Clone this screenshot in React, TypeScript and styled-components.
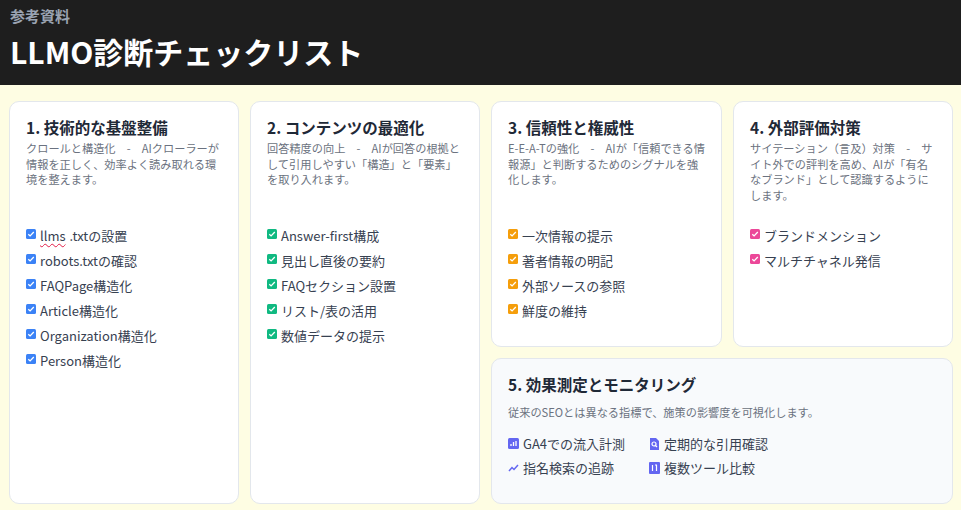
import React from "react";
import styled, { createGlobalStyle } from "styled-components";

const Global = createGlobalStyle`
  body { margin: 0; background: #fefde3; font-family: "Noto Sans CJK JP", "Noto Sans", sans-serif; }
`;

const Header = styled.header`
  background: #1e1e1e; height: 85px; box-sizing: border-box; padding: 5px 10px 0;
`;
const Sub = styled.div`color: #9aa3b2; font-size: 15px; font-weight: 700; line-height: 22px;`;
const Title = styled.h1`color: #fff; font-size: 30px; font-weight: 700; margin: 4px 0 0; line-height: 40px;`;

const Grid = styled.main`
  display: grid; grid-template-columns: 230px 230px 231px 220px; gap: 11px;
  grid-template-rows: 246px 146px; padding: 16px 8px 6px 9px;
`;
const Card = styled.section<{ $span?: boolean; $tall?: boolean; $alt?: boolean }>`
  background: ${p => (p.$alt ? "#f8fafc" : "#fff")};
  border: 1px solid #e3e7ec; border-radius: 10px; box-sizing: border-box;
  padding: 14px 16px;
  ${p => (p.$tall ? "grid-row: span 2;" : "")}
  ${p => (p.$span ? "grid-column: span 2; padding: 14px 16px;" : "")}
`;
const CardTitle = styled.h2`font-size: 15.5px; font-weight: 700; color: #1f2937; margin: 0; line-height: 22px;`;
const Desc = styled.p<{ $short?: boolean }>`
  font-size: 11.2px; color: #6b7280; line-height: 15.5px; margin: 3px 0 0;
  min-height: ${p => (p.$short ? "auto" : "86px")};
  ${p => (p.$short ? "margin-top: 10px;" : "")}
`;
const List = styled.ul`list-style: none; margin: 0; padding: 0; display: flex; flex-direction: column; gap: 6.7px;`;
const Item = styled.li`display: flex; align-items: center; gap: 4px; font-size: 13px; color: #374151; line-height: 18.3px;`;
const Box = styled.span<{ $c: string }>`
  width: 10px; height: 10px; background: ${p => p.$c}; border-radius: 1.5px;
  display: inline-flex; align-items: center; justify-content: center; margin-top: -4px; flex: none;
`;
const Wavy = styled.span`text-decoration: underline wavy #e11d48; text-decoration-thickness: 1px; text-underline-offset: 2px;`;
const Metrics = styled.div`display: grid; grid-template-columns: 141px auto; row-gap: 4px; margin-top: 13px;`;
const Metric = styled.div`display: flex; align-items: center; gap: 4px; font-size: 13px; color: #374151; line-height: 20px;`;

const Check = ({ c }: { c: string }) => (
  <Box $c={c}>
    <svg width="8" height="8" viewBox="0 0 8 8"><path d="M1.3 4.2 3.1 5.9 6.8 2" stroke="#fff" strokeWidth="1.3" fill="none" /></svg>
  </Box>
);

const cards = [
  { t: "1. 技術的な基盤整備", d: "クロールと構造化　-　AIクローラーが情報を正しく、効率よく読み取れる環境を整えます。", c: "#3b82f6",
    items: [<><Wavy>llms</Wavy>.txtの設置</>, "robots.txtの確認", "FAQPage構造化", "Article構造化", "Organization構造化", "Person構造化"], tall: true },
  { t: "2. コンテンツの最適化", d: "回答精度の向上　-　AIが回答の根拠として引用しやすい「構造」と「要素」を取り入れます。", c: "#10b981",
    items: ["Answer-first構成", "見出し直後の要約", "FAQセクション設置", "リスト/表の活用", "数値データの提示"], tall: true },
  { t: "3. 信頼性と権威性", d: "E-E-A-Tの強化　-　AIが「信頼できる情報源」と判断するためのシグナルを強化します。", c: "#f59e0b",
    items: ["一次情報の提示", "著者情報の明記", "外部ソースの参照", "鮮度の維持"] },
  { t: "4. 外部評価対策", d: "サイテーション（言及）対策　-　サイト外での評判を高め、AIが「有名なブランド」として認識するようにします。", c: "#ec4899",
    items: ["ブランドメンション", "マルチチャネル発信"] },
];

const Ic = ({ k }: { k: number }) => {
  if (k === 0) return <svg width="11" height="11" viewBox="0 0 11 11"><rect width="11" height="11" rx="1.5" fill="#6366f1" /><path d="M3 8V6M5.5 8V4M8 8V3" stroke="#fff" strokeWidth="1.3" /></svg>;
  if (k === 1) return <svg width="11" height="11" viewBox="0 0 11 11"><path d="M1 9 4 5.5 6 7.5 10 3" stroke="#6366f1" strokeWidth="1.5" fill="none" /></svg>;
  if (k === 2) return <svg width="11" height="12" viewBox="0 0 11 12"><path d="M1 0h6l3 3v9H1z" fill="#6366f1" /><circle cx="5" cy="6" r="2" stroke="#fff" strokeWidth="1.2" fill="none" /><path d="M6.4 7.4 8 9" stroke="#fff" strokeWidth="1.2" /></svg>;
  return <svg width="11" height="12" viewBox="0 0 11 12"><rect width="11" height="12" rx="1" fill="#6366f1" /><path d="M3.5 3v6M7.5 3v6M6 3h2" stroke="#fff" strokeWidth="1.2" /></svg>;
};

export default function App() {
  return (
    <>
      <Global />
      <Header>
        <Sub>参考資料</Sub>
        <Title>LLMO診断チェックリスト</Title>
      </Header>
      <Grid>
        {cards.map((c, i) => (
          <Card key={i} $tall={c.tall}>
            <CardTitle>{c.t}</CardTitle>
            <Desc>{c.d}</Desc>
            <List>
              {c.items.map((it, j) => (
                <Item key={j}><Check c={c.c} />{it}</Item>
              ))}
            </List>
          </Card>
        ))}
        <Card $span $alt>
          <CardTitle>5. 効果測定とモニタリング</CardTitle>
          <Desc $short>従来のSEOとは異なる指標で、施策の影響度を可視化します。</Desc>
          <Metrics>
            <Metric><Ic k={0} />GA4での流入計測</Metric>
            <Metric><Ic k={2} />定期的な引用確認</Metric>
            <Metric><Ic k={1} />指名検索の追跡</Metric>
            <Metric><Ic k={3} />複数ツール比較</Metric>
          </Metrics>
        </Card>
      </Grid>
    </>
  );
}
